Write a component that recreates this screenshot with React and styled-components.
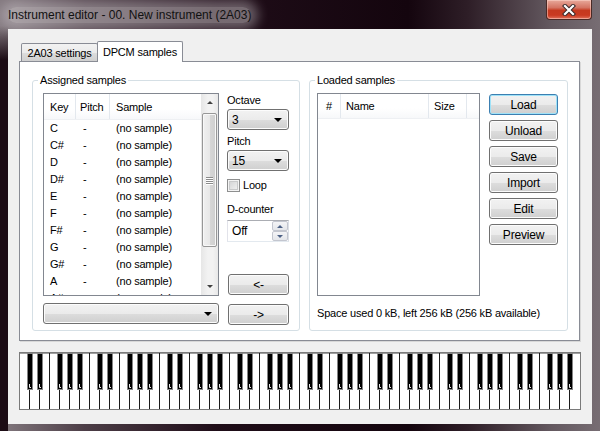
import styled, { createGlobalStyle } from "styled-components";

const GlobalStyle = createGlobalStyle`
  html, body {
    margin: 0;
    padding: 0;
    background: #1a0a13;
  }
  body {
    font-family: "Liberation Sans", Arial, sans-serif;
    font-size: 11px;
    letter-spacing: -0.2px;
    color: #000;
  }
`;

const Frame = styled.div`
  width: 600px;
  height: 431px;
  box-sizing: border-box;
  display: flex;
  flex-direction: column;
  background:
    linear-gradient(180deg, rgba(28, 12, 21, 0) 26px, #1c0c15 60px) left top / 8px 100% no-repeat,
    linear-gradient(90deg, #83797f 0%, #4d3e47 14%, #1f0d18 36%, #14050e 68%, #2e1e27 78%, #645960 92%, #776d73 100%);
`;

const TitleBar = styled.div`
  height: 29px;
  display: flex;
  align-items: flex-start;
  padding: 0 8px;
`;

const Title = styled.span`
  margin-top: 7px;
  font-size: 12px;
  line-height: 16px;
  letter-spacing: 0;
  color: #111;
  border-radius: 10px;
  background: rgba(226, 221, 224, 0.45);
  box-shadow: 0 0 12px 7px rgba(226, 221, 224, 0.4);
`;

const CloseButton = styled.div`
  margin-left: auto;
  width: 46px;
  height: 20px;
  box-sizing: border-box;
  border: 1px solid #4a2a26;
  border-top: none;
  border-radius: 0 0 4px 4px;
  background: linear-gradient(180deg, #e8a99b 0%, #d47463 40%, #c5391f 55%, #c93a21 80%, #e0705a 100%);
  box-shadow: inset 0 0 0 1px rgba(255, 220, 210, 0.5);
  display: flex;
  align-items: center;
  justify-content: center;
`;

const ClientArea = styled.div`
  flex: 1;
  margin: 0 8px 7px;
  background: #f0f0f0;
  padding: 12px 11px 0;
  display: flex;
  flex-direction: column;
`;

const TabStrip = styled.div`
  height: 20px;
  display: flex;
  align-items: flex-end;
  padding-left: 2px;
`;

const Tab = styled.div`
  box-sizing: border-box;
  width: ${(p) => p.$w}px;
  height: ${(p) => (p.$active ? 21 : 18)}px;
  margin-bottom: ${(p) => (p.$active ? -1 : 0)}px;
  margin-left: ${(p) => (p.$active ? -1 : 0)}px;
  position: relative;
  z-index: ${(p) => (p.$active ? 2 : 1)};
  border: 1px solid #898c95;
  border-bottom: none;
  border-radius: 2px 2px 0 0;
  background: ${(p) =>
    p.$active ? "#fff" : "linear-gradient(180deg, #f2f2f2 0%, #ebebeb 50%, #dddddd 51%, #cfcfcf 100%)"};
  display: flex;
  align-items: center;
  justify-content: center;
  line-height: 14px;
  padding-top: ${(p) => (p.$active ? 0 : 1)}px;
`;

const Pane = styled.div`
  box-sizing: border-box;
  width: 561px;
  height: 280px;
  border: 1px solid #898c95;
  background: #fff;
  display: flex;
  gap: 9px;
  padding: 11px 11px 0 12px;
  box-shadow: 1px 1px 0 #d8d8d8;
`;

const Group = styled.fieldset`
  box-sizing: border-box;
  margin: 0;
  width: ${(p) => p.$w}px;
  height: 258px;
  border: 1px solid #d5dfe5;
  border-radius: 3px;
  padding: 6px ${(p) => p.$pr}px 0 ${(p) => p.$pl}px;
  min-width: 0;
`;

const Legend = styled.legend`
  padding: 0 2px;
  margin-left: ${(p) => p.$ml}px;
  line-height: 14px;
`;

const AssignedGrid = styled.div`
  display: grid;
  grid-template-columns: 176px 62px;
  grid-template-rows: 203px 21px;
  column-gap: 8px;
  row-gap: 7px;
`;

const ListView = styled.div`
  box-sizing: border-box;
  width: ${(p) => p.$w}px;
  height: 203px;
  border: 1px solid #828790;
  background: #fff;
  display: flex;
  overflow: hidden;
`;

const ListMain = styled.div`
  flex: 1;
  min-width: 0;
  overflow: hidden;
`;

const Header = styled.div`
  height: ${(p) => p.$h}px;
  display: flex;
  border-bottom: 1px solid #eef0f3;
  background: linear-gradient(180deg, #ffffff 0%, #ffffff 60%, #f7f8fa 100%);
`;

const HeadCell = styled.div`
  box-sizing: border-box;
  width: ${(p) => p.$w}px;
  padding-left: ${(p) => p.$pl}px;
  display: flex;
  align-items: center;
  border-right: ${(p) => (p.$sep ? "1px solid #e3e8ee" : "none")};
  white-space: nowrap;
`;

const Row = styled.div`
  height: 17px;
  display: flex;
  line-height: 17px;
`;

const Cell = styled.div`
  box-sizing: border-box;
  width: ${(p) => p.$w}px;
  padding-left: ${(p) => p.$pl}px;
  white-space: nowrap;
`;

const ScrollBar = styled.div`
  width: 17px;
  display: flex;
  flex-direction: column;
  background: linear-gradient(90deg, #e6e6e6 0%, #f2f2f2 40%, #f2f2f2 70%, #e8e8e8 100%);
`;

const ScrollArrow = styled.div`
  height: 17px;
  display: flex;
  align-items: center;
  justify-content: center;
`;

const Thumb = styled.div`
  margin: 2px 1px 0;
  height: 134px;
  box-sizing: border-box;
  border: 1px solid #979797;
  border-radius: 2px;
  background: linear-gradient(90deg, #f0f0f0 0%, #e8e8e8 50%, #d6d6d6 55%, #cfcfcf 100%);
  box-shadow: inset 0 0 0 1px #f8f8f8;
  display: flex;
  flex-direction: column;
  align-items: center;
  justify-content: center;
  gap: 1px;
`;

const Grip = styled.span`
  width: 7px;
  height: 1px;
  background: #8a8a8a;
  box-shadow: 0 1px 0 #fff;
`;

const Track = styled.div`
  flex: 1;
`;

const Side = styled.div`
  display: flex;
  flex-direction: column;
`;

const Label = styled.div`
  line-height: 14px;
  margin-top: ${(p) => p.$mt || 0}px;
  white-space: nowrap;
`;

const Combo = styled.div`
  box-sizing: border-box;
  width: ${(p) => p.$w}px;
  height: 21px;
  margin-top: ${(p) => p.$mt || 0}px;
  border: 1px solid #707070;
  border-radius: 3px;
  background: linear-gradient(180deg, #f2f2f2 0%, #ebebeb 50%, #dddddd 51%, #cfcfcf 100%);
  box-shadow: inset 0 0 0 1px #fcfcfc;
  display: flex;
  align-items: center;
  justify-content: space-between;
  padding: 0 6px 0 4px;
  font-size: 12px;
`;

const DropArrow = styled.span`
  width: 0;
  height: 0;
  border-left: 4px solid transparent;
  border-right: 4px solid transparent;
  border-top: 4px solid #000;
  margin-left: auto;
`;

const CheckRow = styled.div`
  display: flex;
  align-items: center;
  gap: 3px;
  margin-top: 8px;
  height: 13px;
  line-height: 13px;
`;

const CheckBox = styled.span`
  box-sizing: border-box;
  width: 13px;
  height: 13px;
  border: 1px solid #8e8f8f;
  background: linear-gradient(135deg, #cfd0d1 0%, #f6f6f6 100%);
  box-shadow: inset 0 0 0 1px #f4f4f4, inset 0 0 0 2px #c9cacb;
`;

const SpinBox = styled.div`
  box-sizing: border-box;
  width: 62px;
  height: 22px;
  margin-top: 4px;
  border: 1px solid #abadb3;
  border-left-color: #e2e3ea;
  border-right-color: #dbdfe6;
  border-bottom-color: #e3e9ef;
  background: #fff;
  display: flex;
  align-items: center;
  padding-left: 4px;
`;

const SpinText = styled.span`
  flex: 1;
  font-size: 12px;
`;

const SpinButtons = styled.div`
  width: 16px;
  height: 20px;
  display: flex;
  flex-direction: column;
`;

const SpinButton = styled.div`
  flex: 1;
  box-sizing: border-box;
  border: 1px solid #c3c6cf;
  border-radius: 2px;
  background: linear-gradient(180deg, #f4f4f6 0%, #e4e6ea 100%);
  display: flex;
  align-items: center;
  justify-content: center;
`;

const SmallTri = styled.span`
  width: 0;
  height: 0;
  border-left: 3px solid transparent;
  border-right: 3px solid transparent;
  ${(p) =>
    p.$up
      ? `border-bottom: 3px solid ${p.$color || "#4d6185"};`
      : `border-top: 3px solid ${p.$color || "#4d6185"};`}
`;

const Button = styled.div`
  box-sizing: border-box;
  width: ${(p) => p.$w}px;
  height: 21px;
  margin-top: ${(p) => p.$mt || 0}px;
  margin-left: ${(p) => p.$ml || 0}px;
  border: 1px solid ${(p) => (p.$default ? "#3c7fb1" : "#707070")};
  border-radius: 3px;
  background: linear-gradient(180deg, #f2f2f2 0%, #ebebeb 50%, #dddddd 51%, #cfcfcf 100%);
  box-shadow: inset 0 0 0 1px ${(p) => (p.$default ? "#9fe2f8" : "#fcfcfc")};
  display: flex;
  align-items: center;
  justify-content: center;
  font-size: 12px;
  line-height: 14px;
`;

const BackButton = styled(Button)`
  margin-top: auto;
  margin-bottom: 1px;
`;

const LoadedBody = styled.div`
  display: flex;
  gap: 9px;
`;

const ButtonColumn = styled.div`
  display: flex;
  flex-direction: column;
  gap: 5px;
  padding-top: 1px;
`;

const Status = styled.div`
  margin-top: 10px;
  line-height: 14px;
  white-space: nowrap;
`;

const PianoBox = styled.div`
  margin-top: 11px;
  width: 562px;
  height: 58px;
  line-height: 0;
`;

const keys = ["C", "C#", "D", "D#", "E", "F", "F#", "G", "G#", "A", "A#"];

const Piano = () => {
  const whites = Array.from({ length: 55 }, (_, i) => i);
  const blacks = [];
  for (let o = 0; o < 8; o++) [0, 1, 3, 4, 5].forEach((k) => blacks.push(o * 7 + k));
  return (
    <PianoBox>
      <svg width="562" height="58" viewBox="0 0 562 58">
        <rect x="0.5" y="0.5" width="561" height="57" fill="#fff" stroke="#7a7a7a" />
        <line x1="1" y1="1.5" x2="561" y2="1.5" stroke="#a0a0a0" />
        {whites.map((i) => (
          <line key={i} x1={10.5 + 10 * i} y1="1" x2={10.5 + 10 * i} y2="57" stroke="#1a1a1a" />
        ))}
        {blacks.map((i) => {
          const x = 8 + 10 * i;
          return (
            <g key={i}>
              <rect x={x + 0.5} y="1.5" width="5" height="36" fill="#000" stroke="#858585" />
              <polyline points={`${x + 2.5},32 ${x + 2.5},35.5 ${x + 4},35.5`} fill="none" stroke="#e8e8e8" />
            </g>
          );
        })}
      </svg>
    </PianoBox>
  );
};

const App = () => {
  return (
    <Frame>
      <GlobalStyle />
      <TitleBar>
        <Title>Instrument editor - 00. New instrument (2A03)</Title>
        <CloseButton>
          <svg width="14" height="12" viewBox="0 0 14 12">
            <path d="M3 2 L11 10 M11 2 L3 10" stroke="#3b2a2a" strokeWidth="4.2" strokeLinecap="square" />
            <path d="M3 2 L11 10 M11 2 L3 10" stroke="#fff" strokeWidth="2.2" strokeLinecap="square" />
          </svg>
        </CloseButton>
      </TitleBar>
      <ClientArea>
        <TabStrip>
          <Tab $w={77}>2A03 settings</Tab>
          <Tab $w={86} $active>
            DPCM samples
          </Tab>
        </TabStrip>
        <Pane>
          <Group $w={268} $pl={10} $pr={10}>
            <Legend $ml={-5}>Assigned samples</Legend>
            <AssignedGrid>
              <ListView $w={176}>
                <ListMain>
                  <Header $h={25}>
                    <HeadCell $w={32} $pl={6} $sep>
                      Key
                    </HeadCell>
                    <HeadCell $w={34} $pl={4} $sep>
                      Pitch
                    </HeadCell>
                    <HeadCell $w={90} $pl={6}>
                      Sample
                    </HeadCell>
                  </Header>
                  {keys.map((k) => (
                    <Row key={k}>
                      <Cell $w={32} $pl={6}>
                        {k}
                      </Cell>
                      <Cell $w={34} $pl={7}>
                        -
                      </Cell>
                      <Cell $w={90} $pl={6}>
                        (no sample)
                      </Cell>
                    </Row>
                  ))}
                </ListMain>
                <ScrollBar>
                  <ScrollArrow>
                    <SmallTri $up $color="#404040" />
                  </ScrollArrow>
                  <Thumb>
                    <Grip />
                    <Grip />
                    <Grip />
                    <Grip />
                  </Thumb>
                  <Track />
                  <ScrollArrow>
                    <SmallTri $color="#404040" />
                  </ScrollArrow>
                </ScrollBar>
              </ListView>
              <Side>
                <Label>Octave</Label>
                <Combo $w={62} $mt={2}>
                  3<DropArrow />
                </Combo>
                <Label $mt={4}>Pitch</Label>
                <Combo $w={62} $mt={2}>
                  15<DropArrow />
                </Combo>
                <CheckRow>
                  <CheckBox />
                  Loop
                </CheckRow>
                <Label $mt={10}>D-counter</Label>
                <SpinBox>
                  <SpinText>Off</SpinText>
                  <SpinButtons>
                    <SpinButton>
                      <SmallTri $up />
                    </SpinButton>
                    <SpinButton>
                      <SmallTri />
                    </SpinButton>
                  </SpinButtons>
                </SpinBox>
                <BackButton $w={61} $ml={1}>
                  &lt;-
                </BackButton>
              </Side>
              <Combo $w={176}>
                <DropArrow />
              </Combo>
              <Button $w={61} $ml={1} $mt={1}>
                -&gt;
              </Button>
            </AssignedGrid>
          </Group>
          <Group $w={259} $pl={7} $pr={9}>
            <Legend $ml={-2}>Loaded samples</Legend>
            <LoadedBody>
              <ListView $w={163}>
                <ListMain>
                  <Header $h={24}>
                    <HeadCell $w={23} $pl={8} $sep>
                      #
                    </HeadCell>
                    <HeadCell $w={88} $pl={5} $sep>
                      Name
                    </HeadCell>
                    <HeadCell $w={38} $pl={5} $sep>
                      Size
                    </HeadCell>
                  </Header>
                </ListMain>
              </ListView>
              <ButtonColumn>
                <Button $w={69} $default>
                  Load
                </Button>
                <Button $w={69}>Unload</Button>
                <Button $w={69}>Save</Button>
                <Button $w={69}>Import</Button>
                <Button $w={69}>Edit</Button>
                <Button $w={69}>Preview</Button>
              </ButtonColumn>
            </LoadedBody>
            <Status>Space used 0 kB, left 256 kB (256 kB available)</Status>
          </Group>
        </Pane>
        <Piano />
      </ClientArea>
    </Frame>
  );
};

export default App;
